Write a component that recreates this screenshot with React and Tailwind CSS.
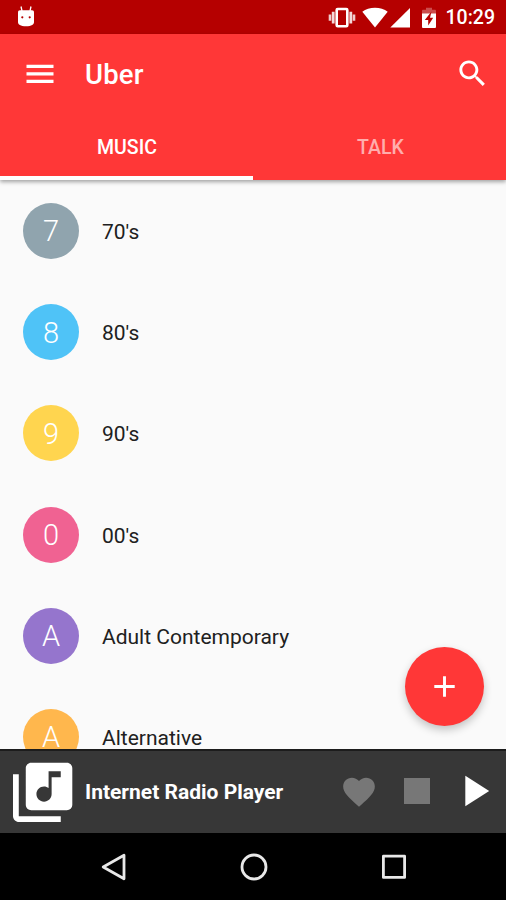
import React, { useState } from 'react';

const genres = [
  { id: 1, letter: '7', name: "70's", color: 'bg-[#90a4ae]' },
  { id: 2, letter: '8', name: "80's", color: 'bg-[#4fc3f7]' },
  { id: 3, letter: '9', name: "90's", color: 'bg-[#ffd54f]' },
  { id: 4, letter: '0', name: "00's", color: 'bg-[#f06292]' },
  { id: 5, letter: 'A', name: 'Adult Contemporary', color: 'bg-[#9575cd]' },
  { id: 6, letter: 'A', name: 'Alternative', color: 'bg-[#ffb74d]' },
];

const StatusBar = () => (
  <div className="flex h-[34px] shrink-0 items-center justify-between bg-[#b50000] pl-[17px] pr-[11px] text-white">
    <svg className="h-[22px] w-[18px]" viewBox="0 0 18 22" fill="currentColor">
      <path d="M4 .5l1 4.500M14 .5l-1 4.500" stroke="currentColor" strokeWidth="1.3" />
      <path d="M3 4.300h12c1.300 0 2 .8 2 2V16c0 2.600-2.400 4.200-8 4.200S1 18.600 1 16V6.300c0-1.200.7-2 2-2z" />
      <circle cx="5.300" cy="11.300" r="1.100" fill="#b50000" />
      <circle cx="12.700" cy="11.300" r="1.100" fill="#b50000" />
    </svg>
    <div className="flex items-center pt-px">
      <svg className="h-[22px] w-[28px]" viewBox="0 0 28 22" fill="none" stroke="currentColor">
        <rect x="8.700" y="2" width="10.600" height="17.200" rx="1" strokeWidth="2.600" />
        <path d="M5.200 4.800v11.600M22.800 4.800v11.600" strokeWidth="2.800" opacity=".85" />
        <path d="M2 7.500v6.200M26 7.500v6.200" strokeWidth="2.600" opacity=".8" />
      </svg>
      <svg className="ml-[6px] h-[22px] w-[26px]" viewBox="0 0 26 22" fill="currentColor">
        <path d="M13 20.500L.3 4.800C3.600 2 8.200.7 13 .7s9.400 1.300 12.700 4.100z" />
      </svg>
      <svg className="ml-[2px] h-[22px] w-[21px]" viewBox="0 0 21 22" fill="currentColor">
        <path d="M.3 20.500H20V1z" />
      </svg>
      <svg className="ml-[10px] h-[22px] w-[16px]" viewBox="0 0 16 22" fill="currentColor">
        <path d="M1 7V4c0-.8.500-1.300 1.300-1.300H5V.7h6v2h2.700c.8 0 1.300.5 1.300 1.300v3z" opacity=".3" />
        <path d="M1 6.500h14v13.200c0 .8-.5 1.300-1.300 1.300H2.300C1.500 21 1 20.500 1 19.700z" />
        <path d="M10.500 4.500L3.800 13h3.400v5.500l5-7.800H9z" fill="#b50000" />
      </svg>
      <span className="ml-[9px] text-[19.500px] leading-none font-medium">10:29</span>
    </div>
  </div>
);

const Header = ({ tab, onTabChange }) => (
  <header className="relative z-10 shrink-0 bg-[#ff3737] text-white shadow-[0_2px_4px_rgba(0,0,0,0.35)]">
    <div className="flex h-[80px] items-center pl-[22px] pr-[16px]">
      <button aria-label="Menu">
        <svg className="h-[36px] w-[36px]" viewBox="0 0 24 24" fill="currentColor">
          <path d="M3 18h18v-2.100H3v2.100zm0-5h18v-2.100H3v2.100zm0-7.100v2.100h18V5.900H3z" />
        </svg>
      </button>
      <h1 className="ml-[27px] pt-[2px] text-[27.500px] leading-none font-medium tracking-[0.2px]">Uber</h1>
      <button className="ml-auto pb-[2px]" aria-label="Search">
        <svg className="h-[35px] w-[35px]" viewBox="0 0 24 24" fill="currentColor">
          <path d="M15.500 14h-.79l-.28-.27C15.410 12.590 16 11.110 16 9.500 16 5.910 13.090 3 9.500 3S3 5.910 3 9.500 5.910 16 9.500 16c1.610 0 3.090-.59 4.230-1.570l.27.28v.79l5 4.990L20.490 19l-4.990-5zm-6 0C7.010 14 5 11.990 5 9.500S7.010 5 9.500 5 14 7.010 14 9.500 11.990 14 9.500 14z" />
        </svg>
      </button>
    </div>
    <nav className="grid h-[66px] grid-cols-2 text-[19.500px] leading-none font-medium">
      <button
        onClick={() => onTabChange('music')}
        className={tab === 'music' ? 'border-b-4 border-white pt-[6px] pl-px' : 'pt-[2px] pl-[2px] text-white/60'}
      >
        MUSIC
      </button>
      <button
        onClick={() => onTabChange('talk')}
        className={tab === 'talk' ? 'border-b-4 border-white pt-[6px] pl-px' : 'pt-[2px] pl-[2px] text-white/60'}
      >
        TALK
      </button>
    </nav>
  </header>
);

const GenreList = () => (
  <ul className="pt-[0.4px] text-[#202020]">
    {genres.map(genre => (
      <li key={genre.id} className="flex h-[101.2px] items-center pl-[23px]">
        <div className={`${genre.color} flex h-[56px] w-[56px] items-center justify-center rounded-full pt-[2px] text-[29px] leading-none font-light text-white`}>
          {genre.letter}
        </div>
        <span className="ml-[23px] pt-[3px] text-[21px] leading-none">{genre.name}</span>
      </li>
    ))}
  </ul>
);

const Player = () => (
  <div className="flex h-[84px] shrink-0 items-center border-t-2 border-[#1c1c1c] bg-[#373737] pl-[6px] text-white">
    <svg className="h-[73px] w-[73px]" viewBox="0 0 24 24" fill="currentColor">
      <path d="M20 2.200H8.300c-1 0-1.800.8-1.800 1.800v12c0 1 .8 1.800 1.800 1.800H20c1 0 1.800-.8 1.800-1.800V4c0-1-.8-1.800-1.800-1.800zm-2 4.800h-3v5.500c0 1.380-1.120 2.500-2.500 2.500S10 13.880 10 12.500s1.120-2.500 2.500-2.500c.57 0 1.080.19 1.500.51V5h4v2zM4.200 6H2.300v13.700c0 1.100.9 2 2 2H18v-1.900H4.200V6z" />
    </svg>
    <span className="ml-[6px] text-[21px] leading-none font-bold">Internet Radio Player</span>
    <div className="ml-auto flex items-center pr-[6px]">
      <svg className="h-[38px] w-[38px] text-[#777777]" viewBox="0 0 24 24" fill="currentColor">
        <path d="M12 21.350l-1.450-1.320C5.400 15.360 2 12.280 2 8.500 2 5.420 4.420 3 7.500 3c1.740 0 3.410.81 4.500 2.090C13.090 3.810 14.760 3 16.500 3 19.580 3 22 5.420 22 8.500c0 3.780-3.400 6.860-8.550 11.540L12 21.350z" />
      </svg>
      <div className="ml-[26px] h-[26px] w-[26px] -translate-y-px bg-[#777777]" />
      <svg className="ml-[18px] h-[52px] w-[52px] -translate-y-px" viewBox="0 0 24 24" fill="currentColor">
        <path d="M8 5v14l11-7z" />
      </svg>
    </div>
  </div>
);

const NavigationBar = () => (
  <div className="flex h-[67px] shrink-0 items-center justify-center gap-[112px] bg-black pl-px text-[#e8e8e8]">
    <svg className="h-[28px] w-[28px]" viewBox="0 0 28 28" fill="none" stroke="currentColor" strokeWidth="2.800" strokeLinejoin="round">
      <path d="M24 2.200v23.600L3.200 14z" />
    </svg>
    <svg className="h-[28px] w-[28px]" viewBox="0 0 28 28" fill="none" stroke="currentColor" strokeWidth="2.800">
      <circle cx="14" cy="14" r="12" />
    </svg>
    <svg className="h-[28px] w-[28px]" viewBox="0 0 28 28" fill="none" stroke="currentColor" strokeWidth="2.800" strokeLinejoin="round">
      <rect x="3.400" y="3.200" width="21.200" height="21.200" />
    </svg>
  </div>
);

const App = () => {
  const [tab, setTab] = useState('music');

  return (
    <div className="flex h-[900px] w-[506px] flex-col overflow-hidden bg-[#fafafa] font-['Roboto',sans-serif]">
      <StatusBar />
      <Header tab={tab} onTabChange={setTab} />
      <main className="relative min-h-0 flex-1 overflow-hidden">
        <GenreList />
        <button
          aria-label="Add"
          className="absolute right-[22px] bottom-[23px] flex h-[79px] w-[79px] items-center justify-center rounded-full bg-[#ff3737] text-white shadow-[0_4px_8px_rgba(0,0,0,0.22)]"
        >
          <svg className="h-[35px] w-[35px]" viewBox="0 0 24 24" fill="currentColor">
            <path d="M19 13h-6v6h-2v-6H5v-2h6V5h2v6h6v2z" />
          </svg>
        </button>
      </main>
      <Player />
      <NavigationBar />
    </div>
  );
};

export default App;
